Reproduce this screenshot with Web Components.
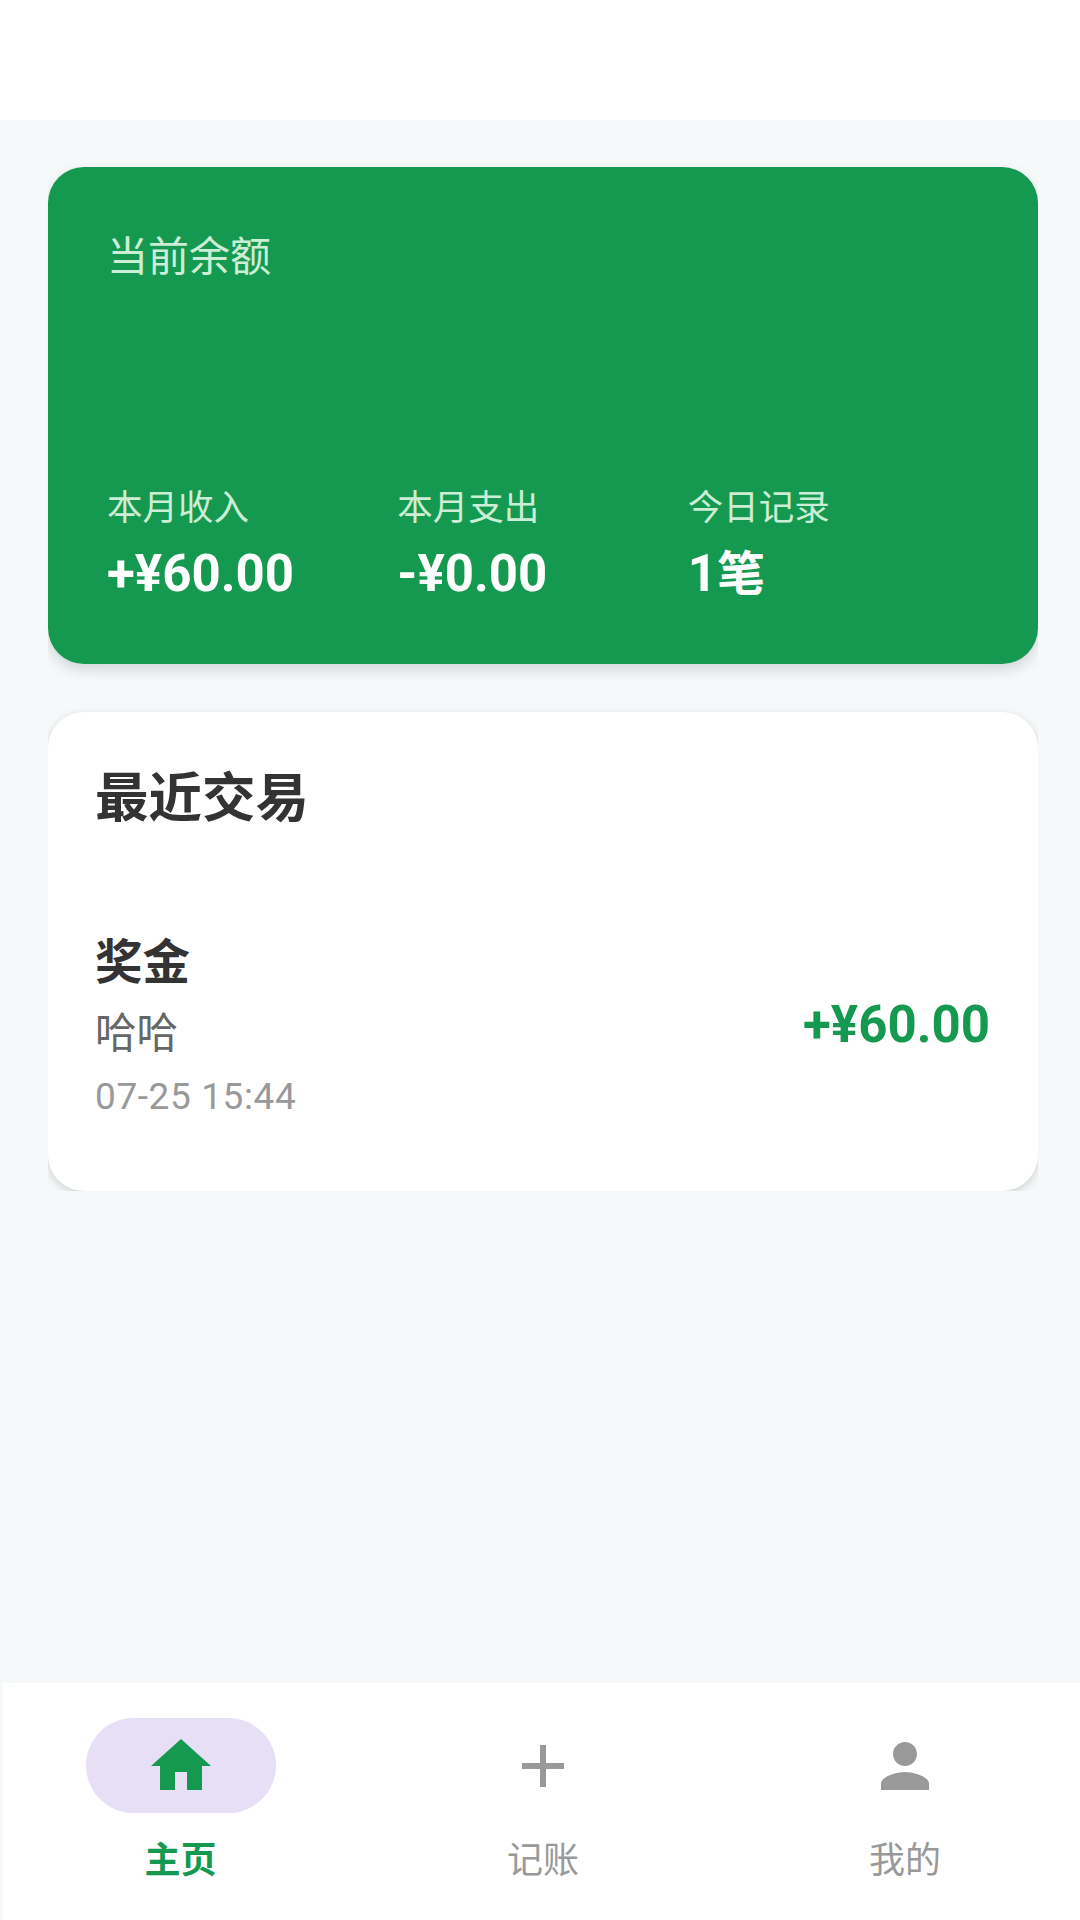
<!DOCTYPE html>
<html lang="zh-CN">
<head>
<meta charset="utf-8">
<title>记账</title>
<style>
  html, body {
    margin: 0;
    width: 1080px;
    height: 1920px;
    overflow: hidden;
    background: #f6f9fa;
    font-family: Roboto, "Noto Sans CJK SC", sans-serif;
  }
  body {
    display: flex;
    flex-direction: column;
  }
</style>
</head>
<body>
  <top-bar></top-bar>
  <page-main>
    <balance-card title="当前余额">
      <stat-item label="本月收入">+¥60.00</stat-item>
      <stat-item label="本月支出">-¥0.00</stat-item>
      <stat-item label="今日记录">1<span style="font-size: 48px">笔</span></stat-item>
    </balance-card>
    <recent-card title="最近交易">
      <tx-row name="奖金" note="哈哈" time="07-25 15:44">+¥60.00</tx-row>
    </recent-card>
  </page-main>
  <bottom-nav>
    <nav-tab label="主页" icon="home" active></nav-tab>
    <nav-tab label="记账" icon="add"></nav-tab>
    <nav-tab label="我的" icon="person"></nav-tab>
  </bottom-nav>

<script>
const ICONS = {
  home: 'M10 20v-6h4v6h5v-8h3L12 3 2 12h3v8z',
  add: 'M19 13h-6v6h-2v-6H5v-2h6V5h2v6h6v2z',
  person: 'M12 12c2.21 0 4-1.79 4-4s-1.79-4-4-4-4 1.79-4 4 1.79 4 4 4zm0 2c-2.67 0-8 1.34-8 4v2h16v-2c0-2.66-5.33-4-8-4z'
}

class TopBar extends HTMLElement {
  constructor () {
    super()
    this.attachShadow({ mode: 'open' })
  }

  connectedCallback () {
    this.shadowRoot.innerHTML = `
      <style>
        :host {
          display: block;
          height: 120px;
          background: #fff;
        }
      </style>
    `
  }
}

class PageMain extends HTMLElement {
  constructor () {
    super()
    this.attachShadow({ mode: 'open' })
  }

  connectedCallback () {
    this.shadowRoot.innerHTML = `
      <style>
        :host {
          display: flex;
          flex-direction: column;
          flex: 1;
          gap: 48px;
          padding: 47px 42px 0 48px;
        }
      </style>
      <slot></slot>
    `
  }
}

class BalanceCard extends HTMLElement {
  constructor () {
    super()
    this.attachShadow({ mode: 'open' })
  }

  connectedCallback () {
    const title = this.getAttribute('title') || ''

    this.shadowRoot.innerHTML = `
      <style>
        :host {
          display: block;
          clip-path: inset(-10px 0 -22px 0);
        }
        .card {
          display: flex;
          flex-direction: column;
          justify-content: space-between;
          box-sizing: border-box;
          height: 497px;
          padding: 62px 60px 59px 59px;
          border-radius: 36px;
          background: #159950;
          box-shadow: 0 6px 14px rgba(0, 0, 0, 0.14);
        }
        .title {
          font-size: 41px;
          line-height: 56px;
          color: #cdeed6;
        }
        .stats {
          display: grid;
          grid-template-columns: repeat(3, 1fr);
        }
      </style>
      <div class="card">
        <div class="title">${title}</div>
        <div class="stats"><slot></slot></div>
      </div>
    `
  }
}

class StatItem extends HTMLElement {
  constructor () {
    super()
    this.attachShadow({ mode: 'open' })
  }

  connectedCallback () {
    const label = this.getAttribute('label') || ''

    this.shadowRoot.innerHTML = `
      <style>
        :host {
          display: block;
        }
        .label {
          font-size: 35.5px;
          line-height: 44px;
          margin-top: 2px;
          margin-bottom: 14px;
          color: #cdeed6;
        }
        .value {
          font-size: 51px;
          line-height: 60px;
          font-weight: 700;
          color: #fff;
        }
      </style>
      <div class="label">${label}</div>
      <div class="value"><slot></slot></div>
    `
  }
}

class RecentCard extends HTMLElement {
  constructor () {
    super()
    this.attachShadow({ mode: 'open' })
  }

  connectedCallback () {
    const title = this.getAttribute('title') || ''

    this.shadowRoot.innerHTML = `
      <style>
        :host {
          display: block;
          clip-path: inset(-8px 0 0 0);
        }
        .card {
          box-sizing: border-box;
          height: 479px;
          padding: 50px 48px 0 47px;
          border-radius: 36px;
          background: #fff;
          box-shadow: 0 3px 10px rgba(0, 0, 0, 0.16);
        }
        .title {
          font-size: 53.5px;
          line-height: 74px;
          font-weight: 700;
          color: #333;
          margin-bottom: 95px;
        }
      </style>
      <div class="card">
        <div class="title">${title}</div>
        <slot></slot>
      </div>
    `
  }
}

class TxRow extends HTMLElement {
  constructor () {
    super()
    this.attachShadow({ mode: 'open' })
  }

  connectedCallback () {
    const name = this.getAttribute('name') || ''
    const note = this.getAttribute('note') || ''
    const time = this.getAttribute('time') || ''

    this.shadowRoot.innerHTML = `
      <style>
        :host {
          display: flex;
          justify-content: space-between;
          align-items: center;
        }
        .name {
          font-size: 47.5px;
          line-height: 64px;
          font-weight: 700;
          color: #333;
          margin-bottom: 10px;
        }
        .note {
          font-size: 41.5px;
          line-height: 58px;
          color: #666;
          margin-bottom: 10px;
        }
        .time {
          font-size: 37px;
          line-height: 48px;
          letter-spacing: 0.6px;
          color: #999;
        }
        .amount {
          font-size: 51px;
          font-weight: 700;
          margin-top: -4px;
          color: #159950;
        }
      </style>
      <div>
        <div class="name">${name}</div>
        <div class="note">${note}</div>
        <div class="time">${time}</div>
      </div>
      <div class="amount"><slot></slot></div>
    `
  }
}

class BottomNav extends HTMLElement {
  constructor () {
    super()
    this.attachShadow({ mode: 'open' })
  }

  connectedCallback () {
    this.shadowRoot.innerHTML = `
      <style>
        :host {
          display: grid;
          grid-template-columns: 359px 362px 362px;
          height: 237px;
          margin-left: 3px;
          overflow: hidden;
          background: #fff;
        }
      </style>
      <slot></slot>
    `
  }
}

class NavTab extends HTMLElement {
  constructor () {
    super()
    this.attachShadow({ mode: 'open' })
  }

  connectedCallback () {
    const label = this.getAttribute('label') || ''
    const icon = ICONS[this.getAttribute('icon')] || ''

    this.shadowRoot.innerHTML = `
      <style>
        :host {
          display: flex;
          flex-direction: column;
          align-items: center;
          padding-top: 35px;
          color: #999;
        }
        :host(:first-child) {
          padding-right: 4px;
        }
        :host([active]) {
          color: #159950;
        }
        .pill {
          display: flex;
          align-items: center;
          justify-content: center;
          width: 190px;
          height: 95px;
          border-radius: 48px;
        }
        :host([active]) .pill {
          background: #e6dff6;
        }
        svg {
          width: 72px;
          height: 72px;
          fill: currentColor;
        }
        .label {
          margin-top: 23px;
          font-size: 36px;
          line-height: 50px;
        }
        :host([active]) .label {
          font-weight: 700;
        }
      </style>
      <div class="pill">
        <svg viewBox="0 0 24 24"><path d="${icon}"/></svg>
      </div>
      <div class="label">${label}</div>
    `
  }
}

customElements.define('top-bar', TopBar)
customElements.define('page-main', PageMain)
customElements.define('balance-card', BalanceCard)
customElements.define('stat-item', StatItem)
customElements.define('recent-card', RecentCard)
customElements.define('tx-row', TxRow)
customElements.define('bottom-nav', BottomNav)
customElements.define('nav-tab', NavTab)
</script>
</body>
</html>
